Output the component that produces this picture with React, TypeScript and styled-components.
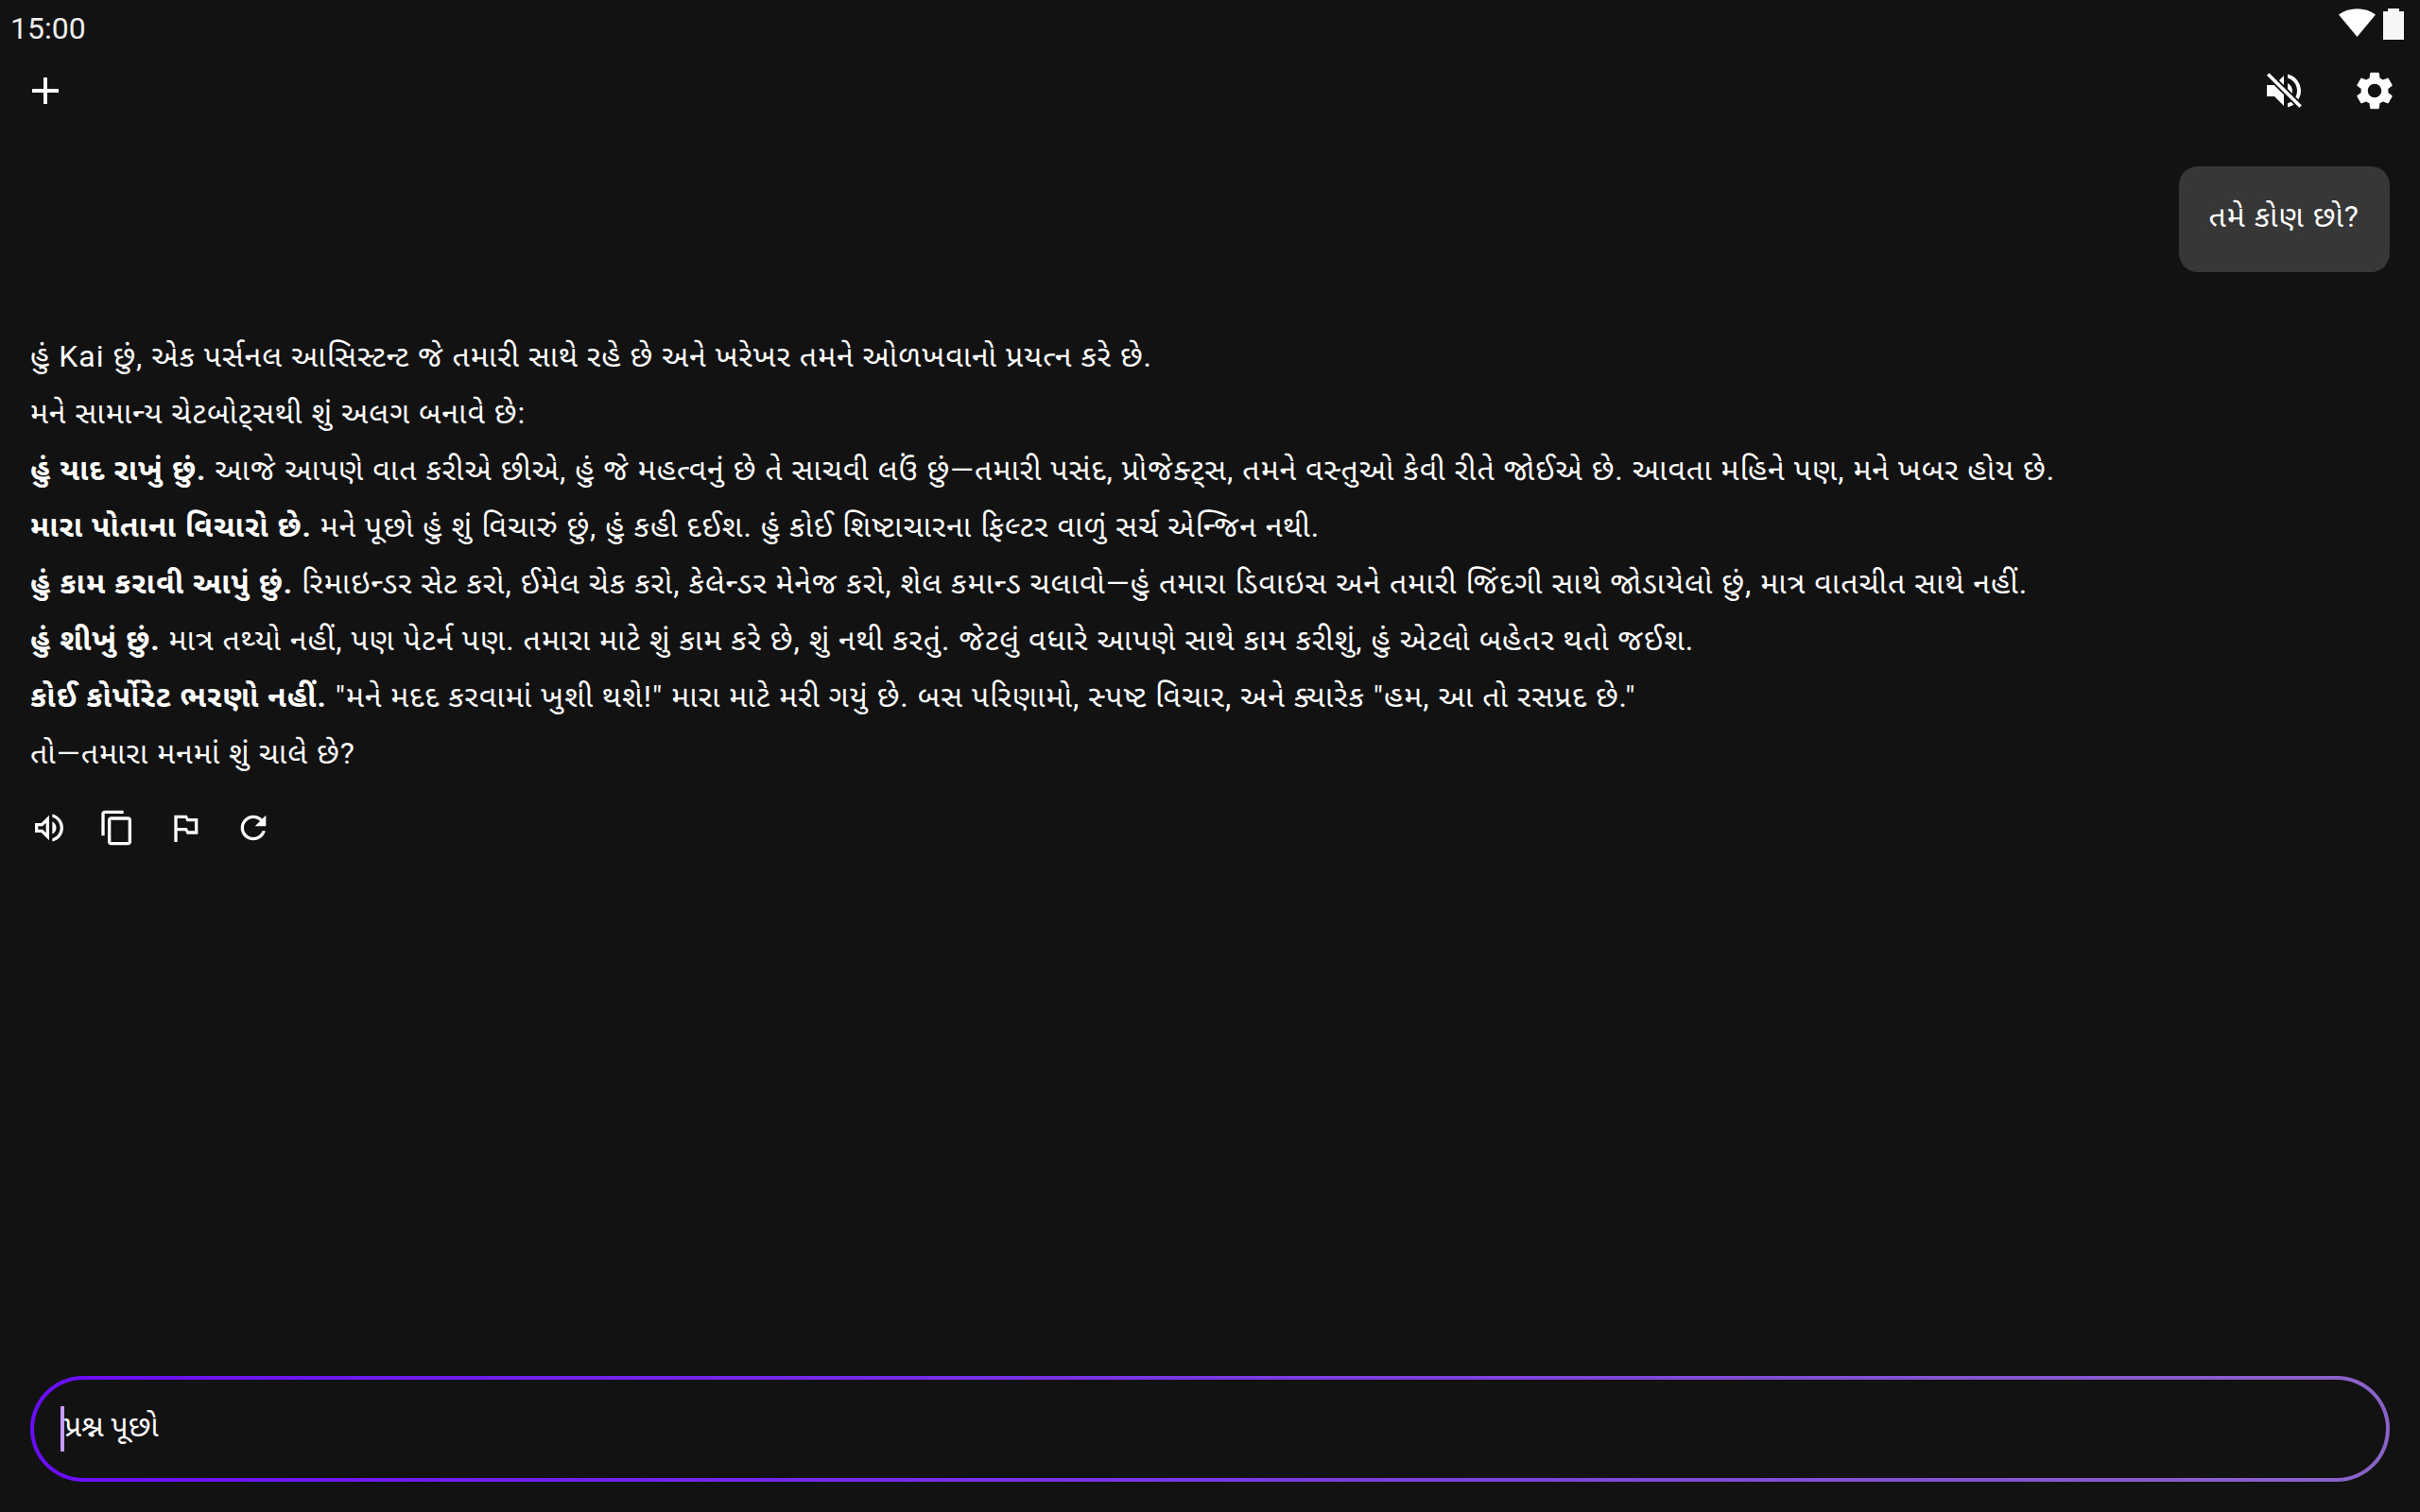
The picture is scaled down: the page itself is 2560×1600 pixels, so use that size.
import { createGlobalStyle, styled } from 'styled-components';

const GlobalStyle = createGlobalStyle`
  html, body {
    margin: 0;
    padding: 0;
    background: #121212;
  }
`;

const paths = {
  add: 'M19 13h-6v6h-2v-6H5v-2h6V5h2v6h6v2z',
  speaker: 'M3 9v6h4l5 5V4L7 9H3zM16.5 12c0-1.77-1.02-3.29-2.5-4.03v8.05c1.48-.73 2.5-2.25 2.5-4.02zM14 3.23v2.06c2.89.86 5 3.54 5 6.71s-2.11 5.85-5 6.71v2.06c4.01-.91 7-4.49 7-8.77 0-4.28-2.99-7.86-7-8.77z',
  settings: 'M19.14 12.94c.04-.3.06-.61.06-.94 0-.32-.02-.64-.07-.94l2.03-1.58c.18-.14.23-.41.12-.61l-1.92-3.32c-.12-.22-.37-.29-.59-.22l-2.39.96c-.5-.38-1.03-.7-1.62-.94l-.36-2.54c-.04-.24-.24-.41-.48-.41h-3.84c-.24 0-.43.17-.47.41l-.36 2.54c-.59.24-1.13.57-1.62.94l-2.39-.96c-.22-.08-.47 0-.59.22L2.74 8.87c-.12.21-.08.47.12.61l2.03 1.58c-.05.3-.09.63-.09.94s.02.64.07.94l-2.03 1.58c-.18.14-.23.41-.12.61l1.92 3.32c.12.22.37.29.59.22l2.39-.96c.5.38 1.03.7 1.62.94l.36 2.54c.05.24.24.41.48.41h3.84c.24 0 .44-.17.47-.41l.36-2.54c.59-.24 1.13-.56 1.62-.94l2.39.96c.22.08.47 0 .59-.22l1.92-3.32c.12-.22.07-.47-.12-.61l-2.01-1.58zM12 15.6c-1.98 0-3.6-1.62-3.6-3.6s1.62-3.6 3.6-3.6 3.6 1.62 3.6 3.6-1.62 3.6-3.6 3.6z',
  volume: 'M3 9v6h4l5 5V4L7 9H3zm7-.17v6.34L7.83 13H5v-2h2.83L10 8.83zM16.5 12c0-1.77-1.02-3.29-2.5-4.03v8.05c1.48-.73 2.5-2.25 2.5-4.02zM14 3.23v2.06c2.89.86 5 3.54 5 6.71s-2.11 5.85-5 6.71v2.06c4.01-.91 7-4.49 7-8.77 0-4.28-2.99-7.86-7-8.77z',
  copy: 'M16 1H4c-1.1 0-2 .9-2 2v14h2V3h12V1zm3 4H8c-1.1 0-2 .9-2 2v14c0 1.1.9 2 2 2h11c1.1 0 2-.9 2-2V7c0-1.1-.9-2-2-2zm0 16H8V7h11v14z',
  flag: 'M14 6l-1-2H5v17h2v-7h5l1 2h7V6h-6zm4 8h-4l-1-2H7V6h5l1 2h5v6z',
  refresh: 'M17.65 6.35C16.2 4.9 14.21 4 12 4c-4.42 0-7.99 3.58-7.99 8s3.57 8 7.99 8c3.73 0 6.84-2.55 7.73-6h-2.08c-.82 2.33-3.04 4-5.65 4-3.31 0-6-2.69-6-6s2.69-6 6-6c1.66 0 3.14.69 4.22 1.78L13 11h7V4l-2.35 2.35z',
};

const Icon = ({ d, size }: { d: string; size: number }) => (
  <svg width={size} height={size} viewBox="0 0 24 24" fill="#fff">
    <path d={d} />
  </svg>
);

// speaker with a slash that cuts a dark gap through it
const MuteIcon = () => (
  <svg width={48} height={48} viewBox="0 0 24 24" fill="#fff">
    <path d={paths.speaker} />
    <path d="M3.6 3.2 L20.8 20.4" stroke="#121212" strokeWidth="3.6" />
    <path d="M3.6 3.2 L20.8 20.4" stroke="#fff" strokeWidth="1.8" />
  </svg>
);

const App = () => {
  return (
    <Screen>
      <GlobalStyle />
      <StatusBar>
        <Clock>15:00</Clock>
        <StatusIcons>
          <svg width="39" height="30" viewBox="0 0 39 30">
            <path d="M0 6.5 C11 -2 28 -2 39 6.5 L19.5 30 Z" fill="#fff" />
          </svg>
          <svg width="22" height="33" viewBox="0 0 22 33">
            <path d="M5 0 H17 V3 H22 V33 H0 V3 H5 Z" fill="#f6f6f6" />
          </svg>
        </StatusIcons>
      </StatusBar>
      <Toolbar>
        <IconButton>
          <Icon d={paths.add} size={48} />
        </IconButton>
        <ToolbarRight>
          <IconButton>
            <MuteIcon />
          </IconButton>
          <IconButton>
            <Icon d={paths.settings} size={48} />
          </IconButton>
        </ToolbarRight>
      </Toolbar>
      <Chat>
        <UserRow>
          <Bubble>તમે કોણ છો?</Bubble>
        </UserRow>
        <Reply>
          <Line>હું Kai છું, એક પર્સનલ આસિસ્ટન્ટ જે તમારી સાથે રહે છે અને ખરેખર તમને ઓળખવાનો પ્રયત્ન કરે છે.</Line>
          <Line>મને સામાન્ય ચેટબોટ્સથી શું અલગ બનાવે છે:</Line>
          <Line>
            <b>હું યાદ રાખું છું.</b> આજે આપણે વાત કરીએ છીએ, હું જે મહત્વનું છે તે સાચવી લઉં છું—તમારી પસંદ, પ્રોજેક્ટ્સ, તમને વસ્તુઓ કેવી રીતે જોઈએ છે. આવતા મહિને પણ, મને ખબર હોય છે.
          </Line>
          <Line>
            <b>મારા પોતાના વિચારો છે.</b> મને પૂછો હું શું વિચારું છું, હું કહી દઈશ. હું કોઈ શિષ્ટાચારના ફિલ્ટર વાળું સર્ચ એન્જિન નથી.
          </Line>
          <Line>
            <b>હું કામ કરાવી આપું છું.</b> રિમાઇન્ડર સેટ કરો, ઈમેલ ચેક કરો, કેલેન્ડર મેનેજ કરો, શેલ કમાન્ડ ચલાવો—હું તમારા ડિવાઇસ અને તમારી જિંદગી સાથે જોડાયેલો છું, માત્ર વાતચીત સાથે નહીં.
          </Line>
          <Line>
            <b>હું શીખું છું.</b> માત્ર તથ્યો નહીં, પણ પેટર્ન પણ. તમારા માટે શું કામ કરે છે, શું નથી કરતું. જેટલું વધારે આપણે સાથે કામ કરીશું, હું એટલો બહેતર થતો જઈશ.
          </Line>
          <Line>
            <b>કોઈ કોર્પોરેટ ભરણો નહીં.</b> "મને મદદ કરવામાં ખુશી થશે!" મારા માટે મરી ગયું છે. બસ પરિણામો, સ્પષ્ટ વિચાર, અને ક્યારેક "હમ, આ તો રસપ્રદ છે."
          </Line>
          <Line>તો—તમારા મનમાં શું ચાલે છે?</Line>
        </Reply>
        <Actions>
          <Icon d={paths.volume} size={40} />
          <Icon d={paths.copy} size={40} />
          <Icon d={paths.flag} size={40} />
          <Icon d={paths.refresh} size={40} />
        </Actions>
      </Chat>
      <InputBar>
        <InputBox>
          <Caret />
          <Placeholder>પ્રશ્ન પૂછો</Placeholder>
        </InputBox>
      </InputBar>
    </Screen>
  );
};

const Screen = styled.div`
  display: flex;
  flex-direction: column;
  width: 2560px;
  height: 1600px;
  overflow: hidden;
  background: #121212;
  color: #fff;
  font-family: Roboto, 'Noto Sans Gujarati', 'Noto Sans', sans-serif;
`;

const StatusBar = styled.div`
  display: flex;
  justify-content: space-between;
  height: 60px;
  padding: 9px 17px 0 11px;
  box-sizing: border-box;
`;

const Clock = styled.span`
  font-size: 32px;
  line-height: 42px;
  color: #eee;
`;

const StatusIcons = styled.div`
  display: flex;
  align-items: flex-start;
  gap: 8px;
`;

const Toolbar = styled.div`
  display: flex;
  justify-content: space-between;
  align-items: center;
  height: 72px;
  padding: 0 24px;
`;

const ToolbarRight = styled.div`
  display: flex;
  gap: 48px;
`;

const IconButton = styled.div`
  display: flex;
  width: 48px;
  height: 48px;
`;

const Chat = styled.div`
  display: flex;
  flex-direction: column;
  flex: 1;
  padding: 44px 32px 0;
`;

const UserRow = styled.div`
  display: flex;
  justify-content: flex-end;
`;

const Bubble = styled.div`
  padding: 23px 32px 29px 31px;
  font-size: 32px;
  line-height: 60px;
  letter-spacing: 1px;
  background: #373737;
  border-radius: 20px;
`;

const Reply = styled.div`
  margin-top: 59px;
`;

const Line = styled.p`
  margin: 0;
  font-size: 32px;
  line-height: 60px;
  letter-spacing: 1px;
  white-space: nowrap;

  b {
    font-weight: 700;
  }
`;

const Actions = styled.div`
  display: flex;
  gap: 32px;
  margin-top: 29px;
`;

const InputBar = styled.div`
  padding: 0 32px 32px;
`;

const InputBox = styled.div`
  position: relative;
  display: flex;
  align-items: center;
  height: 112px;
  padding: 0 32px 6px;
  box-sizing: border-box;
  border: 4px solid transparent;
  border-radius: 56px;
  background:
    linear-gradient(#121212, #121212) padding-box,
    linear-gradient(90deg, #6a0dff, #8a63c8) border-box;
`;

const Caret = styled.span`
  position: absolute;
  left: 28px;
  top: 28px;
  width: 4px;
  height: 48px;
  background: #c79bf5;
`;

const Placeholder = styled.span`
  font-size: 32px;
  line-height: 48px;
`;

export default App;
